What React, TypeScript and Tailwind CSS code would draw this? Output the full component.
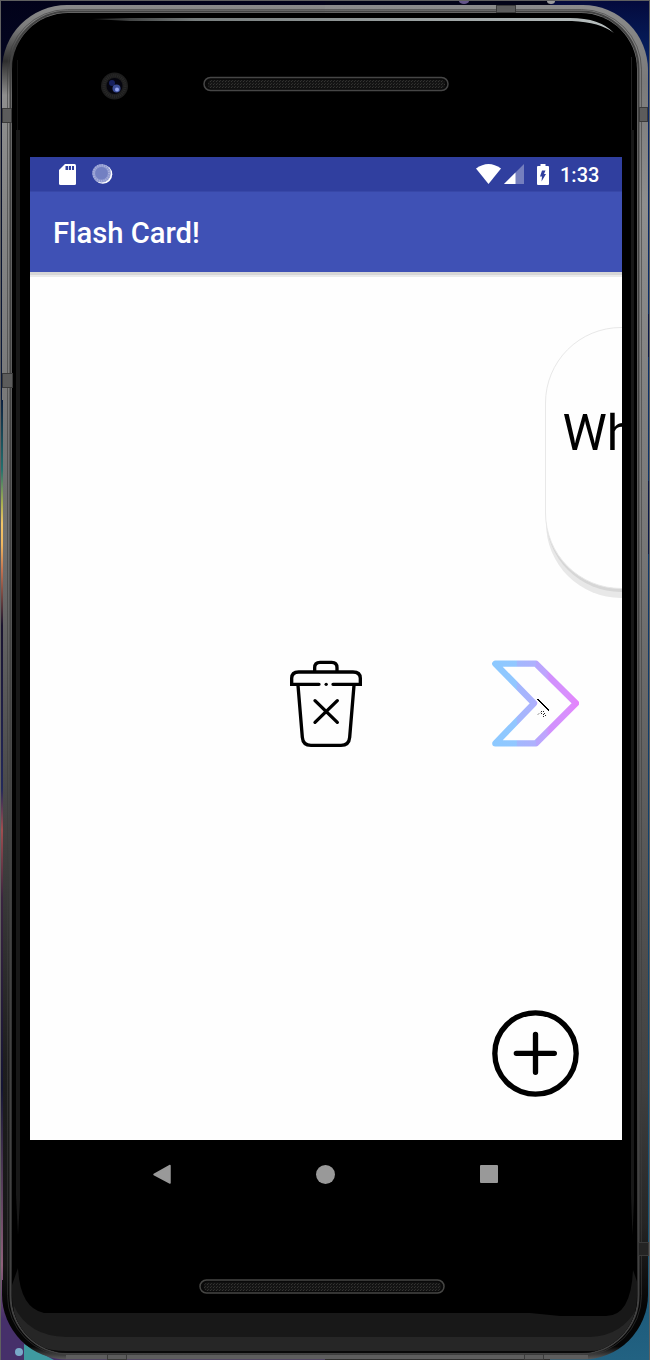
import React from "react";

function DeviceShell() {
  return (
    <svg className="absolute inset-0" width="650" height="1360" viewBox="0 0 650 1360" aria-hidden="true">
      <defs>
        <linearGradient id="rimLeft" x1="0" y1="0" x2="0" y2="1360" gradientUnits="userSpaceOnUse">
          <stop offset="0" stopColor="#8c8c8c" />
          <stop offset="0.02" stopColor="#7c7c7c" />
          <stop offset="0.045" stopColor="#2e2e2e" />
          <stop offset="0.07" stopColor="#8e8e8e" />
          <stop offset="0.15" stopColor="#858585" />
          <stop offset="0.4" stopColor="#707070" />
          <stop offset="0.6" stopColor="#454545" />
          <stop offset="0.78" stopColor="#1e1e1e" />
          <stop offset="0.93" stopColor="#161616" />
          <stop offset="0.96" stopColor="#050505" />
          <stop offset="0.99" stopColor="#050505" />
          <stop offset="1" stopColor="#606060" />
        </linearGradient>
        <linearGradient id="rimRight" x1="0" y1="0" x2="0" y2="1360" gradientUnits="userSpaceOnUse">
          <stop offset="0" stopColor="#8c8c8c" />
          <stop offset="0.06" stopColor="#7a7a7a" />
          <stop offset="0.15" stopColor="#8e8e8e" />
          <stop offset="0.4" stopColor="#777777" />
          <stop offset="0.6" stopColor="#5c5c5c" />
          <stop offset="0.8" stopColor="#404040" />
          <stop offset="0.9" stopColor="#252525" />
          <stop offset="0.96" stopColor="#050505" />
          <stop offset="0.99" stopColor="#050505" />
          <stop offset="1" stopColor="#606060" />
        </linearGradient>
        <linearGradient id="glint" x1="90" y1="0" x2="615" y2="0" gradientUnits="userSpaceOnUse">
          <stop offset="0" stopColor="#222" />
          <stop offset="0.2" stopColor="#777d7d" />
          <stop offset="1" stopColor="#b8bfbf" />
        </linearGradient>
        <linearGradient id="wallLeft" x1="0" y1="0" x2="0" y2="1360" gradientUnits="userSpaceOnUse">
          <stop offset="0" stopColor="#02021a" />
          <stop offset="0.29" stopColor="#0b1a3c" />
          <stop offset="0.345" stopColor="#23706e" />
          <stop offset="0.37" stopColor="#a8b050" />
          <stop offset="0.385" stopColor="#f2c468" />
          <stop offset="0.4" stopColor="#f0b860" />
          <stop offset="0.42" stopColor="#c07050" />
          <stop offset="0.46" stopColor="#1a1430" />
          <stop offset="0.58" stopColor="#22285a" />
          <stop offset="0.61" stopColor="#a04e50" />
          <stop offset="0.66" stopColor="#3a2440" />
          <stop offset="0.8" stopColor="#141434" />
          <stop offset="0.93" stopColor="#90607c" />
          <stop offset="0.97" stopColor="#46306a" />
          <stop offset="1" stopColor="#46306a" />
        </linearGradient>
        <linearGradient id="wallRight" x1="0" y1="0" x2="0" y2="1360" gradientUnits="userSpaceOnUse">
          <stop offset="0" stopColor="#040a3c" />
          <stop offset="0.05" stopColor="#062468" />
          <stop offset="0.9" stopColor="#165070" />
          <stop offset="1" stopColor="#226282" />
        </linearGradient>
        <pattern id="mesh" width="3" height="3" patternUnits="userSpaceOnUse">
          <rect width="3" height="3" fill="#141414" />
          <rect width="1" height="1" fill="#353533" />
          <rect x="1" y="2" width="1" height="1" fill="#2c2c2a" />
        </pattern>
        <clipPath id="leftHalf"><rect width="325" height="1360" /></clipPath>
        <clipPath id="rightHalf"><rect x="325" width="325" height="1360" /></clipPath>
        <clipPath id="glass"><rect x="12" y="13" width="625" height="1340" rx="56" /></clipPath>
      </defs>

      <rect width="325" height="1360" fill="url(#wallLeft)" />
      <rect x="325" width="225" height="10" fill="#030418" />
      <rect x="550" width="100" height="1360" fill="url(#wallRight)" />
      <ellipse cx="464" cy="1" rx="5" ry="3" fill="#65558a" />
      <ellipse cx="551" cy="1" rx="4" ry="3" fill="#9a9a9c" />
      <path d="M24 1360V1344L54 1360Z" fill="#3f9aa0" />
      <circle cx="19" cy="1352" r="4" fill="#78a9c8" />

      <rect x="2" y="5" width="646" height="1354.500" rx="65" fill="url(#rimLeft)" clipPath="url(#leftHalf)" />
      <rect x="2" y="5" width="646" height="1354.500" rx="65" fill="url(#rimRight)" clipPath="url(#rightHalf)" />
      <rect x="1" y="400" width="2" height="880" fill="url(#wallLeft)" />
      <path d="M648.500 314V357M648.500 481V554" stroke="#08184a" />
      <rect x="7.500" y="9.500" width="634" height="1346" rx="60" fill="none" stroke="#3c3c3c" strokeOpacity=".6" />
      <rect x="10.500" y="11.500" width="628" height="1342" rx="58" fill="none" stroke="#424242" strokeWidth="2" />
      <rect x="12" y="13" width="625" height="1340" rx="56" fill="#000" />
      <path d="M66 1357H588" stroke="#5e5e5e" strokeWidth="4" />

      <g clipPath="url(#glass)">
        <path d="M12 1285L18 1268Q20 1308 44 1313H210L530 1313L560 1316H606Q631 1316 633 1270L640 1290V1360H12Z" fill="#181818" />
        <path d="M14 1306Q28 1336 66 1337H590Q622 1336 637 1308V1360H14Z" fill="#262626" />
        <path d="M14 1330Q35 1351 66 1351H590Q620 1351 637 1330V1360H14Z" fill="#090909" />
      </g>
      <path d="M16 130H20V1200L18 1235L16 1195Z" fill="#181818" />
      <path d="M17.500 60V130" stroke="#111" />
      <path d="M631 130H634V1200L632.500 1235L631 1195Z" fill="#181818" />
      <path d="M631.500 57V130" stroke="#202020" />

      <path d="M92 19L130 18H570Q600 18 614 33Q600 22 572 21H130Z" fill="url(#glint)" />

      <g fill="#5c5c5c" stroke="#3a3a3a">
        <rect x="2.500" y="108.500" width="9" height="14" />
        <rect x="2.500" y="373.500" width="10" height="14" />
        <rect x="639.500" y="107.500" width="8" height="14" />
        <rect x="496.500" y="5.500" width="19" height="7" />
        <rect x="107.500" y="1354.500" width="19" height="5" />
        <rect x="524.500" y="1354.500" width="19" height="5" />
        <rect x="638.500" y="1242.500" width="10" height="13" fill="#242424" />
      </g>

      <circle cx="114.500" cy="86" r="13.500" fill="#1d1d1d" />
      <circle cx="114.500" cy="86" r="10.500" fill="none" stroke="#292929" strokeWidth="3" strokeDasharray="1 1" />
      <circle cx="114.500" cy="86" r="8" fill="#05050f" />
      <circle cx="112" cy="83" r="3" fill="#17215f" />
      <circle cx="116.500" cy="88.500" r="4" fill="#3b4d96" />
      <circle cx="117" cy="89.500" r="2" fill="#93a3ee" />

      <rect x="204" y="77.500" width="244" height="13" rx="6.500" fill="#090909" stroke="#464646" strokeWidth="1.500" />
      <rect x="208" y="80" width="237" height="8.500" rx="4" fill="url(#mesh)" />
      <rect x="200" y="1280" width="244" height="13" rx="6.500" fill="#090909" stroke="#464644" strokeWidth="1.500" />
      <rect x="204" y="1282.500" width="237" height="8.500" rx="4" fill="url(#mesh)" />

      <path d="M0.500 1360V0M0 0.500H650M649.500 0V1360" fill="none" stroke="#606060" />
    </svg>
  );
}

function StatusBar() {
  return (
    <div className="flex h-[34px] shrink-0 items-center bg-[#303f9f] pr-[23px] pl-[29px] text-white">
      <svg width="17" height="21" viewBox="0 0 17 21">
        <path d="M6 0H15.500Q17 0 17 1.500V19.500Q17 21 15.500 21H1.500Q0 21 0 19.500V6Z" fill="#fff" />
        <path d="M6.500 2H9V6H6.500ZM9.800 2H12V6H9.800ZM13 2H15V6H13Z" fill="#303f9f" />
      </svg>
      <svg className="ml-[15.500px]" width="21" height="20" viewBox="0 0 21 20">
        <circle cx="10.800" cy="10.300" r="9.500" fill="#fff" />
        <circle cx="9.500" cy="9.300" r="9.300" fill="#8d97ce" />
        <circle cx="9.500" cy="9.300" r="7.800" fill="none" stroke="#a9b1dc" strokeWidth="2.500" strokeDasharray="1 1.300" />
        <circle cx="9.500" cy="9.300" r="6.300" fill="#7380c2" />
      </svg>
      <svg className="ml-auto" width="25" height="20" viewBox="0 0 25 20">
        <path d="M0 4.500Q12.500-4.500 25 4.500L12.500 20Z" fill="#fff" />
      </svg>
      <svg className="ml-[3px]" width="20" height="20" viewBox="0 0 20 20">
        <path d="M0 20L20 0V20Z" fill="#757fbe" />
        <path d="M0 20L11.500 8.500V20Z" fill="#fff" />
      </svg>
      <svg className="ml-[13px]" width="12" height="21" viewBox="0 0 12 21">
        <path d="M3.500 0H8.500V2H11Q12 2 12 3V20Q12 21 11 21H1Q0 21 0 20V3Q0 2 1 2H3.500Z" fill="#fff" />
        <path d="M5 6.500H8.500L7 10H9L4.500 17.500L5 12.500H3Z" fill="#303f9f" />
      </svg>
      <span className="ml-[11px] w-[39px] pt-[2px] text-[20px] leading-[34px] font-medium">1:33</span>
    </div>
  );
}

function TrashIcon() {
  return (
    <svg width="72" height="87" viewBox="60 60 216 261" fill="none" stroke="#000" strokeWidth="10" strokeLinecap="round" strokeLinejoin="round">
      <path d="M134 94V83Q134 67 150 67H185Q201 67 201 83V94" />
      <path d="M147 133H65V115Q65 96 86 96H249Q271 96 271 115V133H189" strokeLinejoin="miter" />
      <path d="M84 136L97 292Q99 316 123 316H213Q237 316 239 292L252 136" />
      <path d="M135 182L202 247M202 182L135 247" />
      <circle cx="168.500" cy="133" r="5" fill="#000" stroke="none" />
    </svg>
  );
}

function NextIcon() {
  return (
    <svg width="87" height="87" viewBox="51 61 261 261">
      <defs>
        <linearGradient id="arrow" x1="51" y1="0" x2="312" y2="0" gradientUnits="userSpaceOnUse">
          <stop offset="0" stopColor="#8cc9ff" />
          <stop offset="0.28" stopColor="#92c7ff" />
          <stop offset="0.29" stopColor="#a2b8fd" />
          <stop offset="0.5" stopColor="#aeb0fd" />
          <stop offset="0.51" stopColor="#b7a6fd" />
          <stop offset="0.62" stopColor="#bfa5fd" />
          <stop offset="0.66" stopColor="#d090fd" />
          <stop offset="0.85" stopColor="#d890fd" />
          <stop offset="1" stopColor="#e681fb" />
        </linearGradient>
      </defs>
      <path d="M61 72H183L303 191L183 311H61L177 191Z" fill="none" stroke="url(#arrow)" strokeWidth="19" strokeLinejoin="round" />
      <g shapeRendering="crispEdges">
        <path d="M187 178L222 213" stroke="#000" strokeWidth="3" />
        <path d="M199 215h3v3h-3zM205 215h3v3h-3zM199 221h3v3h-3zM205 224h3v3h-3zM208 221h3v3h-3zM205 230h3v3h-3zM211 227h3v3h-3z" fill="#222" />
        <path d="M187 226L199 216" stroke="#ccc" strokeWidth="3" />
      </g>
    </svg>
  );
}

function AddIcon() {
  return (
    <svg width="87" height="87" viewBox="51 30 261 261" fill="none" stroke="#000" strokeWidth="16" strokeLinecap="round">
      <circle cx="181.500" cy="160.500" r="122" />
      <path d="M124 160H238M181.500 103V217" />
    </svg>
  );
}

export default function App() {
  return (
    <div className="relative h-[1360px] w-[650px] overflow-hidden bg-black font-['Roboto',sans-serif]">
      <DeviceShell />
      <div className="relative flex h-full flex-col pt-[157px] pr-[28px] pl-[30px]">
        <main className="flex h-[983px] shrink-0 flex-col overflow-hidden bg-[#fefefe]">
          <StatusBar />
          <header className="z-10 flex h-[81px] shrink-0 items-center border-t border-[#3848a8] bg-[#3f51b5] pl-[23px] shadow-[0_3px_0_#d6d6d6,0_5px_0_#ebebeb]">
            <h1 className="pt-[3px] text-[29.200px] leading-none font-medium text-white">Flash Card!</h1>
          </header>
          <section className="flex grow flex-col pt-[55px]">
            <div className="ml-[515px] h-[262px] w-[512px] rounded-[76px] border border-[#e8e8e8] bg-[#fefefe] pt-[75px] pl-[16.500px] shadow-[0_4px_0_-1px_#d6d6d6,0_10px_0_-1px_#e8e8e8]">
              <p className="text-[50px] leading-[60px] whitespace-nowrap text-black">Wh</p>
            </div>
            <div className="mt-[71px] flex pl-[260px]">
              <button aria-label="Delete card"><TrashIcon /></button>
              <button aria-label="Next card" className="ml-[130px]"><NextIcon /></button>
            </div>
            <button aria-label="Add card" className="mt-auto mr-[43px] mb-[43px] self-end"><AddIcon /></button>
          </section>
        </main>
        <nav className="flex h-[68px] shrink-0 items-center pl-[123px]">
          <svg width="18" height="20" viewBox="0 0 18 20"><path d="M1 10.500L17 1.500V19Z" fill="#999" stroke="#999" strokeWidth="1.500" strokeLinejoin="round" /></svg>
          <span className="ml-[145px] size-[19px] rounded-full bg-[#999]" />
          <span className="ml-[145px] size-[18px] rounded-[1px] bg-[#999]" />
        </nav>
      </div>
    </div>
  );
}
